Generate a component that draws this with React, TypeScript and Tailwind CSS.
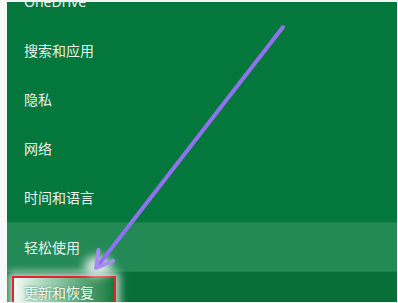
import React from 'react'

const items = ['OneDrive', '搜索和应用', '隐私', '网络', '时间和语言']

export default function App() {
  return (
    <div
      className="relative flex h-[303px] w-[398px] overflow-hidden bg-[#f1f4f2]"
      style={{ fontFamily: '"Noto Sans", "Noto Sans CJK SC", sans-serif' }}
    >
      <div className="w-[7px] shrink-0 bg-[#f7f8f7]" />
      <div className="mt-[2px] mr-[1px] mb-[1px] flex flex-1 flex-col overflow-hidden bg-[#03773c]">
        <div className="-mt-[25px] flex flex-col">
          {items.map((t) => (
            <div key={t} className="flex h-[49px] items-center pl-[17px] text-[14px] text-[#e8f3ec]">
              {t}
            </div>
          ))}
          <div className="flex h-[50px] items-center border-y border-[#1c8048] bg-[#238955] pl-[17px] text-[14px] text-[#e8f3ec]">
            轻松使用
          </div>
          <div className="flex h-[49px] items-start bg-[#086f39] pt-[4px]">
            <div className="relative ml-[5px] flex h-[40px] w-[104px] items-start border-2 border-[#e0262d] bg-gradient-to-r from-[#f4fbf6] via-[#7fbf98] to-[#0d7a40] pl-[10px] pt-[4px] text-[14px] text-[#1f6e44] shadow-[0_0_8px_4px_rgba(255,255,255,0.7)]">
              <span className="text-[#f2f8f4] [text-shadow:0_0_3px_#2b7d50]">更新和恢复</span>
            </div>
          </div>
        </div>
      </div>
      <svg className="pointer-events-none absolute left-0 top-0" width="398" height="303">
        <defs>
          <filter id="glow" x="-50%" y="-50%" width="200%" height="200%">
            <feGaussianBlur stdDeviation="5" />
          </filter>
        </defs>
        <ellipse cx="98" cy="266" rx="14" ry="10" fill="#ffffff" opacity="0.8" filter="url(#glow)" />
        <line x1="283" y1="27" x2="97" y2="267" stroke="#8f72f0" strokeWidth="4" strokeLinecap="round" />
        <polyline
          points="98.5,250 96,268 113,261"
          fill="none"
          stroke="#a88af5"
          strokeWidth="4"
          strokeLinecap="round"
          strokeLinejoin="round"
        />
      </svg>
    </div>
  )
}
